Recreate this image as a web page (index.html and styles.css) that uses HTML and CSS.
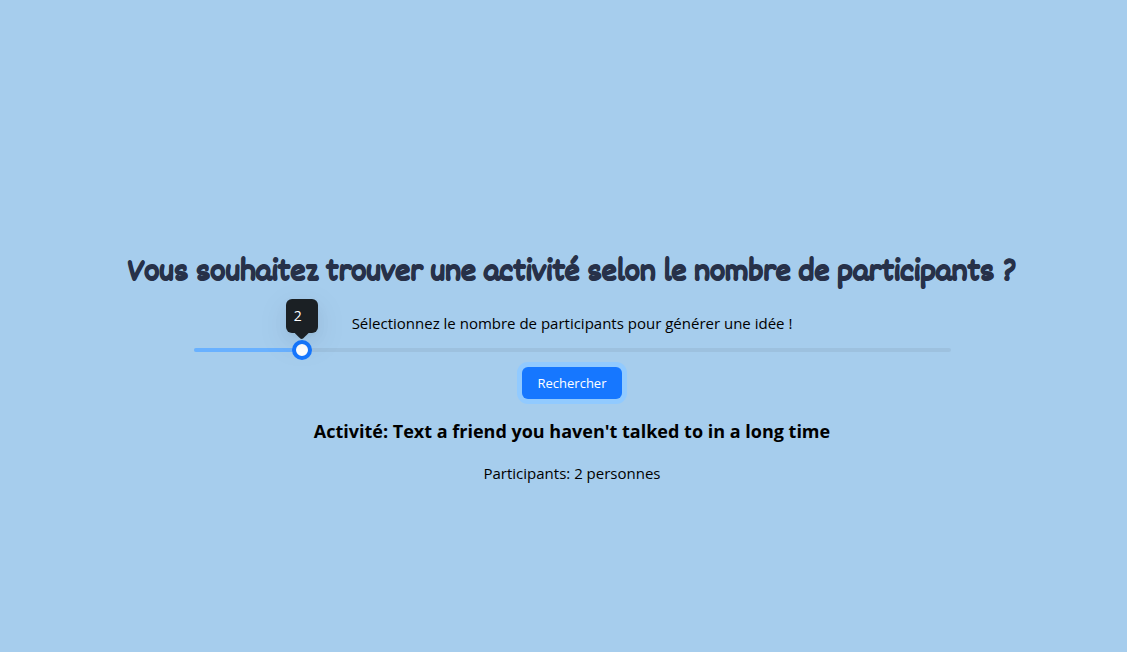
FILE: index.html
```html
<!DOCTYPE html>
<html lang="fr">
<head>
<meta charset="utf-8">
<meta name="viewport" content="width=device-width, initial-scale=1">
<title>Trouver une activité</title>
<link rel="stylesheet" href="styles.css">
</head>
<body>
<main class="page">
  <h1 class="title">Vous souhaitez trouver une activité selon le nombre de participants ?</h1>
  <label class="hint" for="participants">Sélectionnez le nombre de participants pour générer une idée !</label>
  <div class="slider">
    <div class="slider-rail"><div class="slider-fill"></div></div>
    <input class="slider-input" id="participants" type="range" min="1" max="8" value="2">
    <output class="tooltip" for="participants">2</output>
  </div>
  <button class="search" type="button">Rechercher</button>
  <h2 class="activity">Activité: Text a friend you haven't talked to in a long time</h2>
  <p class="count">Participants: 2 personnes</p>
</main>
</body>
</html>
```
FILE: styles.css
```css
* { box-sizing: border-box; }

body {
  margin: 0;
  background: #a6cded;
  color: #000;
  font-family: "Segoe UI", "Open Sans", "Noto Sans", sans-serif;
}

.page {
  min-height: 100vh;
  padding: 79px 0 0 17px;
  display: flex;
  flex-direction: column;
  align-items: center;
  justify-content: center;
  text-align: center;
}

.title {
  margin: 0 0 11px;
  color: #273149;
  font-family: "Dekko", "Patrick Hand", "Lato", sans-serif;
  font-size: 34px;
  line-height: 54px;
  font-weight: 700;
  -webkit-text-stroke: 1px #273149;
}

.hint,
.count {
  margin: 0;
  font-size: 15px;
  line-height: 22px;
}

.slider {
  position: relative;
  display: grid;
  align-items: center;
  width: 70%;
  margin: 6px 0 7px;
  --ratio: calc(1 / 7);
}

.slider-rail,
.slider-input { grid-area: 1 / 1; }

.slider-rail {
  height: 4px;
  margin: 0 10px;
  border-radius: 2px;
  background: #9dc1df;
}

.slider-fill {
  width: calc(100% * var(--ratio));
  height: 4px;
  border-radius: 2px;
  background: #69b1ff;
}

.slider-input {
  appearance: none;
  width: 100%;
  height: 20px;
  margin: 0;
  background: transparent;
  outline: none;
}

.slider-input::-webkit-slider-thumb {
  appearance: none;
  width: 20px;
  height: 20px;
  border: 4px solid #1677ff;
  border-radius: 50%;
  background: #fff;
}

.tooltip {
  position: absolute;
  bottom: 27px;
  left: calc(10px + (100% - 20px) * var(--ratio));
  transform: translateX(-50%);
  width: 32px;
  padding: 6px 8px;
  border-radius: 6px;
  background: #1b2024;
  color: #fff;
  font-size: 14px;
  line-height: 22px;
  text-align: left;
  box-shadow: 0 6px 16px rgba(0, 0, 0, .04), 0 3px 6px -4px rgba(0, 0, 0, .12), 0 9px 28px 8px rgba(0, 0, 0, .04);
}

.tooltip::after {
  content: "";
  position: absolute;
  top: 100%;
  left: 50%;
  margin-left: -7px;
  width: 14px;
  height: 6px;
  background: #1b2024;
  clip-path: polygon(0 0, 100% 0, 60% 90%, 50% 100%, 40% 90%);
}

.search {
  height: 32px;
  padding: 4px 16px;
  border: 0;
  border-radius: 6px;
  background: #1677ff;
  box-shadow: 0 0 0 5px #91caff;
  color: #fff;
  font-family: inherit;
  font-size: 13px;
  line-height: 22px;
}

.activity {
  margin: 21px 0 20px;
  font-size: 18px;
  line-height: 22px;
  font-weight: 700;
}
```
